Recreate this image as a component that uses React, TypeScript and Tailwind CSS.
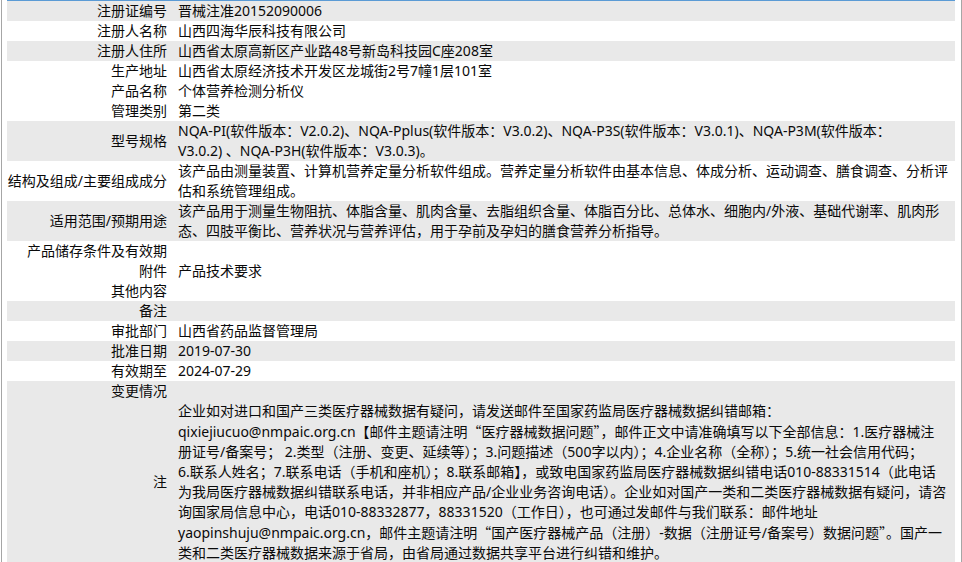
import React from 'react';

type Row = {
  label: string;
  value?: React.ReactNode;
  shade?: boolean;
};

const NOTE_LINES = [
  '企业如对进口和国产三类医疗器械数据有疑问，请发送邮件至国家药监局医疗器械数据纠错邮箱：',
  'qixiejiucuo@nmpaic.org.cn【邮件主题请注明“医疗器械数据问题”，邮件正文中请准确填写以下全部信息：1.医疗器械注',
  '册证号/备案号； 2.类型（注册、变更、延续等）；3.问题描述（500字以内）；4.企业名称（全称）；5.统一社会信用代码；',
  '6.联系人姓名；7.联系电话（手机和座机）；8.联系邮箱】，或致电国家药监局医疗器械数据纠错电话010-88331514（此电话',
  '为我局医疗器械数据纠错联系电话，并非相应产品/企业业务咨询电话）。企业如对国产一类和二类医疗器械数据有疑问，请咨',
  '询国家局信息中心，电话010-88332877，88331520（工作日），也可通过发邮件与我们联系：邮件地址',
  'yaopinshuju@nmpaic.org.cn，邮件主题请注明“国产医疗器械产品（注册）-数据（注册证号/备案号）数据问题”。国产一',
  '类和二类医疗器械数据来源于省局，由省局通过数据共享平台进行纠错和维护。',
];

// curly quotes come out wide in the original, so give them the CJK face
const withQuotes = (s: string) =>
  s.split(/([“”])/).map((part, i) =>
    part === '“' || part === '”' ? (
      <span key={i} className="font-['Noto_Sans_CJK_SC']">
        {part}
      </span>
    ) : (
      part
    )
  );

// keep the original line breaks of the detail page
const lines = (arr: string[]) =>
  arr.map((l, i) => (
    <div key={i} className="whitespace-nowrap">
      {withQuotes(l)}
    </div>
  ));

const rows: Row[] = [
  { label: '注册证编号', value: '晋械注准20152090006', shade: true },
  { label: '注册人名称', value: '山西四海华辰科技有限公司' },
  { label: '注册人住所', value: '山西省太原高新区产业路48号新岛科技园C座208室', shade: true },
  { label: '生产地址', value: '山西省太原经济技术开发区龙城街2号7幢1层101室' },
  { label: '产品名称', value: '个体营养检测分析仪' },
  { label: '管理类别', value: '第二类' },
  {
    label: '型号规格',
    value: lines([
      'NQA-PI(软件版本：V2.0.2)、NQA-Pplus(软件版本：V3.0.2)、NQA-P3S(软件版本：V3.0.1)、NQA-P3M(软件版本：',
      'V3.0.2) 、NQA-P3H(软件版本：V3.0.3)。',
    ]),
    shade: true,
  },
  {
    label: '结构及组成/主要组成成分',
    value: lines([
      '该产品由测量装置、计算机营养定量分析软件组成。营养定量分析软件由基本信息、体成分析、运动调查、膳食调查、分析评',
      '估和系统管理组成。',
    ]),
  },
  {
    label: '适用范围/预期用途',
    value: lines([
      '该产品用于测量生物阻抗、体脂含量、肌肉含量、去脂组织含量、体脂百分比、总体水、细胞内/外液、基础代谢率、肌肉形',
      '态、四肢平衡比、营养状况与营养评估，用于孕前及孕妇的膳食营养分析指导。',
    ]),
    shade: true,
  },
  { label: '产品储存条件及有效期' },
  { label: '附件', value: '产品技术要求' },
  { label: '其他内容' },
  { label: '备注', shade: true },
  { label: '审批部门', value: '山西省药品监督管理局' },
  { label: '批准日期', value: '2019-07-30', shade: true },
  { label: '有效期至', value: '2024-07-29' },
  { label: '变更情况', shade: true },
  { label: '注', value: lines(NOTE_LINES), shade: true },
];

export default function App() {
  return (
    <div
      className="h-[562px] w-[962px] overflow-hidden bg-white text-[14px] leading-[20px] text-[#0a0a0a]"
      style={{ fontFamily: '"Noto Sans", "Noto Sans CJK SC", sans-serif' }}
    >
      <div className="ml-px h-full w-[961px] border-x border-[#a6a6a6] pl-[5px] pr-[5px]">
        <div className="w-[948px] border-t border-[#5b9bd5]">
          {rows.map((r) => (
            <div key={r.label} className={`flex min-h-[20px] ${r.shade ? 'bg-[#e9e9e9]' : 'bg-white'}`}>
              <div className="flex w-[165px] shrink-0 items-center justify-end whitespace-nowrap pr-[5px]">
                {r.label}
              </div>
              <div className="min-w-0 flex-1 pl-[6px] pr-[5px]">{r.value}</div>
            </div>
          ))}
        </div>
      </div>
    </div>
  );
}
